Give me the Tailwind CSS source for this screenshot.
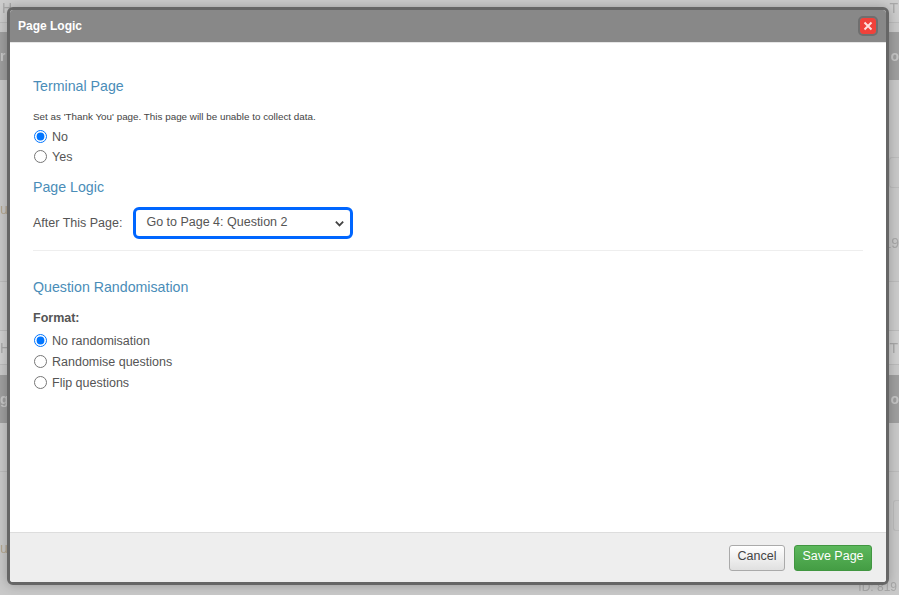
<!DOCTYPE html>
<html lang="en">
<head>
<meta charset="UTF-8">
<title>Page Logic</title>
<script src="https://cdn.jsdelivr.net/npm/@tailwindcss/browser@4"></script>
</head>
<body class="bg-[#cccccc] font-['Liberation_Sans',Arial,sans-serif] text-[#555555] overflow-hidden">
<div class="relative w-[899px] h-[595px] overflow-hidden">
    <!-- Dimmed page behind the modal -->
    <div class="flex flex-col h-full text-[#a8a8a8] text-sm">
        <div class="h-[23px] shrink-0 bg-[#cdcdcd] border-b border-[#bcbcbc] flex justify-between pl-[2px] pr-[1px]">
            <span class="blur-[0.6px] leading-[16px]">H</span>
            <span class="blur-[0.6px] leading-[16px]">T</span>
        </div>
        <div class="h-[9px] shrink-0 bg-[#cacaca]"></div>
        <div class="h-[48px] shrink-0 bg-[#9f9f9f] flex items-center justify-between text-[#c6c6c6] font-bold">
            <span class="blur-[0.6px]">r</span>
            <span class="blur-[0.6px]">o</span>
        </div>
        <div class="h-[202px] shrink-0 bg-[#c9c9c9] border-b border-[#bcbcbc] flex justify-between">
            <span class="blur-[0.6px] text-[#b5a78f] mt-[119px]">u</span>
            <div class="flex flex-col items-end">
                <div class="w-[10px] h-[31px] mt-[77px] border border-[#bcbcbc] border-r-0 rounded-l-[3px]"></div>
                <span class="blur-[0.6px] mt-[45px]">19</span>
            </div>
        </div>
        <div class="h-[48px] shrink-0 bg-[#cccccc]"></div>
        <div class="h-[35px] shrink-0 bg-[#d0d0d0] border-y border-[#bcbcbc] flex justify-between items-center pr-[1px]">
            <span class="blur-[0.6px]">H</span>
            <span class="blur-[0.6px]">T</span>
        </div>
        <div class="h-[10px] shrink-0 bg-[#cacaca]"></div>
        <div class="h-[48px] shrink-0 bg-[#9f9f9f] flex items-center justify-between text-[#c6c6c6] font-bold">
            <span class="blur-[0.6px]">g</span>
            <span class="blur-[0.6px]">o</span>
        </div>
        <div class="h-[49px] shrink-0 bg-[#c9c9c9] border-b border-[#bcbcbc]"></div>
        <div class="flex-1 bg-[#c9c9c9] flex justify-between">
            <span class="blur-[0.6px] text-[#b5a78f] mt-[66px]">u</span>
            <div class="flex flex-col items-end">
                <div class="w-[6px] h-[31px] mt-[28px] border border-[#bcbcbc] border-r-0 rounded-l-[3px]"></div>
                <span class="blur-[0.5px] mr-[2px] mt-[49px] text-xs leading-[14px]">ID: 819</span>
            </div>
        </div>
    </div>

    <!-- Modal -->
    <div class="absolute left-[7px] top-[7px] w-[882px] h-[578px] flex flex-col bg-white border-[3px] border-[#666666] rounded-[6px] overflow-hidden shadow-[0_0_12px_rgba(0,0,0,0.25)]">
        <div class="h-[33px] shrink-0 bg-[#888888] border-b border-[#e6e6e6] flex items-center justify-between pl-[8px] pr-[10px]">
            <span class="text-white text-[12px] font-bold">Page Logic</span>
            <button class="w-[16px] h-[16px] rounded-[3px] bg-[#f0413a] outline-2 outline-[#6f6f6f] flex items-center justify-center">
                <svg class="w-[10px] h-[10px]" viewBox="0 0 10 10" fill="none" stroke="#ffdfdd" stroke-width="2"><path d="M1.5 1.5l7 7M8.5 1.5l-7 7"/></svg>
            </button>
        </div>

        <div class="flex-1 px-[23px] pt-[35px]">
            <h3 class="text-[#4a8db8] text-[14.2px] leading-[17px]">Terminal Page</h3>
            <p class="text-[9.85px] leading-[12px] mt-[16px] text-[#444444]">Set as 'Thank You' page. This page will be unable to collect data.</p>
            <div class="flex flex-col gap-[4px] mt-[6px] text-[12.5px] leading-[16px]">
                <label class="flex items-center gap-[5px]"><input type="radio" name="t" checked class="m-0 w-[13px] h-[13px] ml-[1px] -translate-y-px accent-[#0075ff]"><span>No</span></label>
                <label class="flex items-center gap-[5px]"><input type="radio" name="t" class="m-0 w-[13px] h-[13px] ml-[1px] -translate-y-px"><span>Yes</span></label>
            </div>
            <h3 class="text-[#4a8db8] text-[14.2px] leading-[16px] mt-[14px]">Page Logic</h3>
            <div class="flex items-center mt-[12px] text-[12.5px]">
                <span>After This Page:</span>
                <div class="ml-[11px] w-[220px] h-[32px] pb-[2px] border-[3px] border-[#0066ff] rounded-[6px] flex items-center justify-between pl-[10px] pr-[5px] bg-white">
                    <span>Go to Page 4: Question 2</span>
                    <svg class="w-[11px] h-[11px] mt-[2px]" viewBox="0 0 12 12" fill="none" stroke="#444444" stroke-width="2"><path d="M2 4l4 4 4-4"/></svg>
                </div>
            </div>
            <div class="border-t border-[#eeeeee] mt-[11px]"></div>
            <h3 class="text-[#4a8db8] text-[14.2px] leading-[17px] mt-[28px]">Question Randomisation</h3>
            <p class="text-[12.5px] leading-[16px] font-bold mt-[14px]">Format:</p>
            <div class="flex flex-col gap-[5px] mt-[7px] text-[12.5px] leading-[16px]">
                <label class="flex items-center gap-[5px]"><input type="radio" name="r" checked class="m-0 w-[13px] h-[13px] ml-[1px] -translate-y-px accent-[#0075ff]"><span>No randomisation</span></label>
                <label class="flex items-center gap-[5px]"><input type="radio" name="r" class="m-0 w-[13px] h-[13px] ml-[1px] -translate-y-px"><span>Randomise questions</span></label>
                <label class="flex items-center gap-[5px]"><input type="radio" name="r" class="m-0 w-[13px] h-[13px] ml-[1px] -translate-y-px"><span>Flip questions</span></label>
            </div>
        </div>

        <div class="h-[50px] shrink-0 bg-[#eeeeee] border-t border-[#dddddd] flex items-center justify-end gap-[9px] pr-[14px] text-[12.5px]">
            <button class="w-[56px] h-[26px] pb-[2px] rounded-[3px] border border-[#aaaaaa] bg-gradient-to-b from-white to-[#e0e0e0] text-[#444444]">Cancel</button>
            <button class="w-[78px] h-[26px] pb-[2px] rounded-[3px] border border-[#419641] bg-gradient-to-b from-[#5cb85c] to-[#449d44] text-white">Save Page</button>
        </div>
    </div>
</div>
</body>
</html>
